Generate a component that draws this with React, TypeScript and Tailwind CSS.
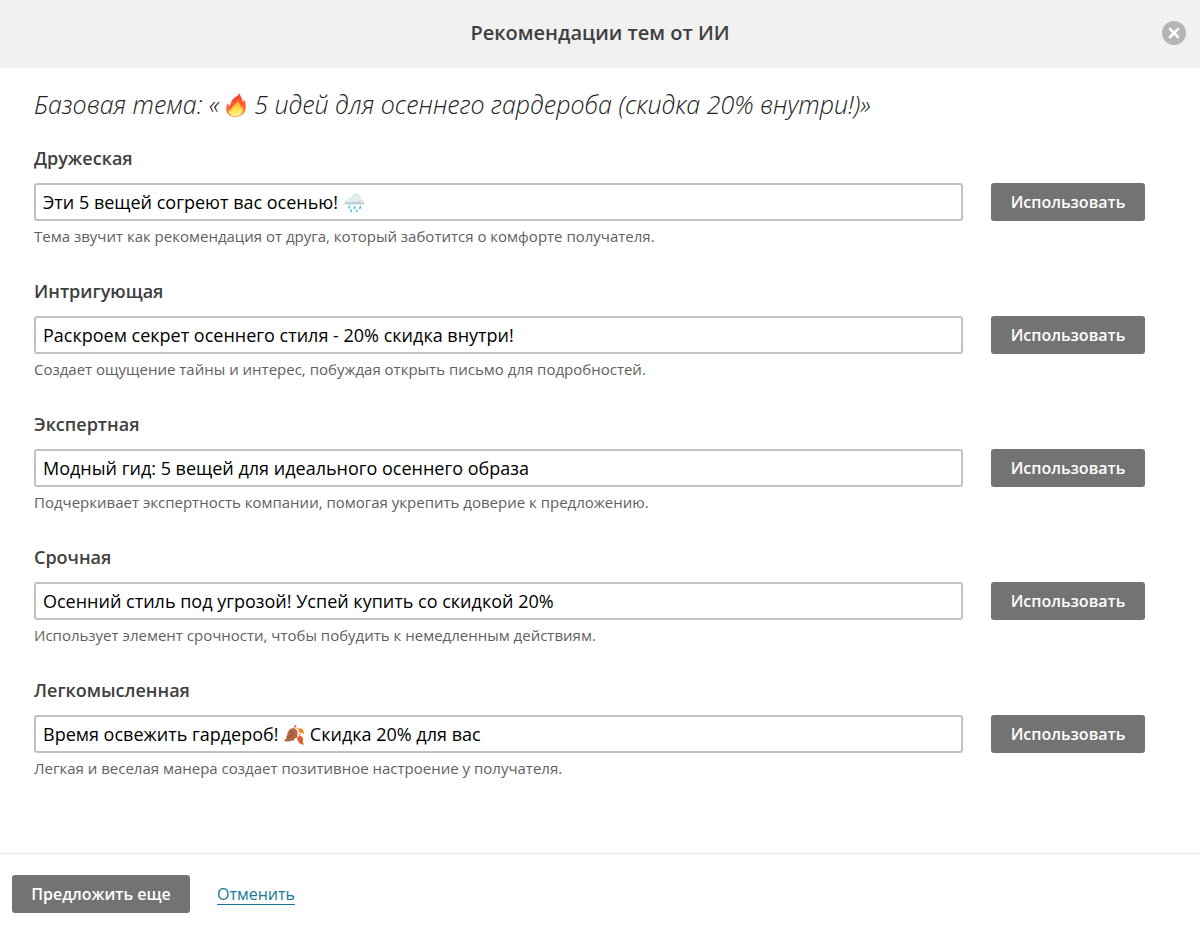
import { useState } from 'react';

interface Suggestion {
  id: string;
  label: string;
  subject: string;
  hint: string;
}

const suggestions: Suggestion[] = [
  {
    id: 'friendly',
    label: 'Дружеская',
    subject: 'Эти 5 вещей согреют вас осенью! 🌧️',
    hint: 'Тема звучит как рекомендация от друга, который заботится о комфорте получателя.',
  },
  {
    id: 'intriguing',
    label: 'Интригующая',
    subject: 'Раскроем секрет осеннего стиля - 20% скидка внутри!',
    hint: 'Создает ощущение тайны и интерес, побуждая открыть письмо для подробностей.',
  },
  {
    id: 'expert',
    label: 'Экспертная',
    subject: 'Модный гид: 5 вещей для идеального осеннего образа',
    hint: 'Подчеркивает экспертность компании, помогая укрепить доверие к предложению.',
  },
  {
    id: 'urgent',
    label: 'Срочная',
    subject: 'Осенний стиль под угрозой! Успей купить со скидкой 20%',
    hint: 'Использует элемент срочности, чтобы побудить к немедленным действиям.',
  },
  {
    id: 'playful',
    label: 'Легкомысленная',
    subject: 'Время освежить гардероб! 🍂 Скидка 20% для вас',
    hint: 'Легкая и веселая манера создает позитивное настроение у получателя.',
  },
];

function FireIcon() {
  return (
    <svg viewBox="0 0 20 24" className="mr-0.5 inline-block h-6 w-5 align-[-3px]" aria-hidden="true">
      <defs>
        <linearGradient id="flame" x1="0" y1="0" x2="0" y2="1">
          <stop offset="0" stopColor="#f8402f" />
          <stop offset="0.6" stopColor="#ff6333" />
          <stop offset="1" stopColor="#ffa52e" />
        </linearGradient>
        <linearGradient id="flame-core" x1="0" y1="0" x2="0" y2="1">
          <stop offset="0" stopColor="#ff9d2b" />
          <stop offset="0.6" stopColor="#ffe04a" />
          <stop offset="1" stopColor="#fff9a8" />
        </linearGradient>
      </defs>
      <path
        fill="url(#flame)"
        d="M14 0c-.6 3 2.600 5 2.800 9 .8-.6 1.100-1.500 1.100-2.500C19.600 9 20 12 19.700 15c-.5 5.500-4.500 9-10 9C4 24 .3 20.500.2 16.500.2 14 1 13 1 10.500c1 .5 1.700 1.400 1.800 2.500C5 11.500 4.500 9 6.500 6.500 8.800 3.800 12.500 3 14 0Z"
      />
      <path
        fill="url(#flame-core)"
        d="M12.500 6.500c-.3 3.500 2.500 5 2.600 8.500.7-.5 1.100-1.200 1.300-2 1.800 5.500-1.400 10.200-6.700 10.200-4.200 0-7-2.700-7-6.200.8.200 1.400.6 1.800 1.200.4-3.200 2-3.700 3.500-5.700 1.800-2 4-3.500 4.500-6Z"
      />
    </svg>
  );
}

function SuggestionRow({ item }: { item: Suggestion }) {
  const [value, setValue] = useState(item.subject);

  return (
    <div className="mb-[31px]">
      <label htmlFor={item.id} className="block text-lg leading-6 font-semibold text-[#404040]">
        {item.label}
      </label>
      <div className="mt-[13px] flex gap-7">
        <input
          id={item.id}
          type="text"
          value={value}
          onChange={(e) => setValue(e.target.value)}
          className="h-[38px] min-w-0 flex-1 rounded-[3px] border-2 border-[#c2c2c2] bg-white px-[7px] text-lg text-black"
        />
        <button
          type="button"
          className="h-[38px] w-[154px] rounded-[3px] bg-[#737373] text-base font-semibold text-white"
        >
          Использовать
        </button>
      </div>
      <p className="mt-[3px] text-[15px] leading-6 text-[#5f5f5f]">{item.hint}</p>
    </div>
  );
}

export default function App() {
  return (
    <div className="bg-white font-['Open_Sans','Noto_Sans',sans-serif]">
      {/* Header */}
      <header className="flex h-[68px] items-center bg-[#f1f1f1] px-3.5 pb-0.5">
        <h1 className="ml-6 flex-1 text-center text-xl font-semibold text-[#404040]">
          Рекомендации тем от ИИ
        </h1>
        <button type="button" aria-label="Закрыть" className="h-6 w-6">
          <svg viewBox="0 0 24 24" className="h-6 w-6">
            <circle cx="12" cy="12" r="12" fill="#b5b5b5" />
            <path d="m8 8 8 8m0-8-8 8" stroke="#fff" strokeWidth="2.500" strokeLinecap="round" />
          </svg>
        </button>
      </header>

      {/* Suggested subjects */}
      <main className="pt-5 pr-[55px] pb-[42px] pl-[34px]">
        <h2 className="mb-[26px] text-[25px] leading-8 font-light text-[#222] italic">
          Базовая тема: « <FireIcon /> 5 идей для осеннего гардероба (скидка 20% внутри!)»
        </h2>
        {suggestions.map((item) => (
          <SuggestionRow key={item.id} item={item} />
        ))}
      </main>

      {/* Actions */}
      <footer className="flex items-center gap-[27px] border-t border-[#e5e5e5] px-3 pt-[21px] pb-3">
        <button
          type="button"
          className="h-[38px] w-[178px] rounded-[3px] bg-[#737373] text-base font-semibold text-white"
        >
          Предложить еще
        </button>
        <a href="#" className="border-b border-[#127a96] text-base leading-5 font-medium text-[#127a96]">
          Отменить
        </a>
      </footer>
    </div>
  );
}
